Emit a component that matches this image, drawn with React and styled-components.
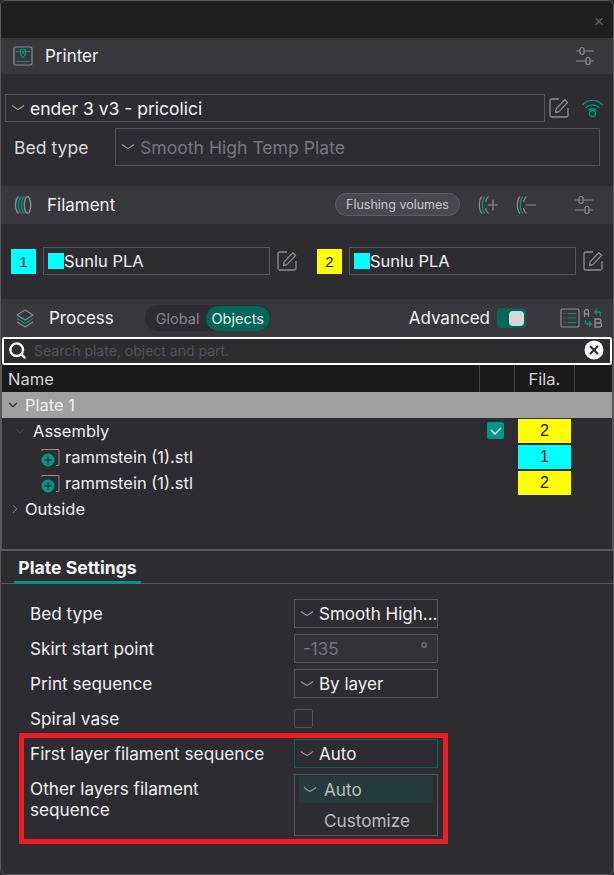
import React from 'react';
import styled, { createGlobalStyle } from 'styled-components';
import { Search, ChevronDown, ChevronRight } from 'lucide-react';

const GRAY = '#8f8f8f';
const TEAL = '#00957f';

const Global = createGlobalStyle`
html, body { margin: 0; padding: 0; background: #2d2d31; }
* { box-sizing: border-box; }
`;

const Window = styled.div`
width: 614px;
height: 875px;
overflow: hidden;
background: #2d2d31;
border: 1px solid #5a5a5c;
border-radius: 6px;
color: #f0f0f0;
font-family: Inter, "Noto Sans", sans-serif;
font-size: 17px;
display: flex;
flex-direction: column;
`;
const TitleBar = styled.div`
height: 37px;
flex: none;
background: #1f1f20;
display: flex;
justify-content: flex-end;
align-items: center;
padding-right: 9px;
padding-top: 5px;
color: #626264;
font-size: 17px;
font-family: "Liberation Sans", sans-serif;
`;
const SectionHeader = styled.div`
height: ${p => p.$h || 36}px;
flex: none;
background: #37373c;
display: flex;
align-items: center;
padding-left: ${p => p.$left || 12}px;
`;
const SectionTitle = styled.span`
margin-left: ${p => p.$gap || 12}px;
font-size: 17px;
color: #f2f2f2;
`;
const Spacer = styled.div`flex: 1;`;
const IconSlot = styled.div`
display: flex;
margin-left: ${p => p.$left || 0}px;
margin-right: ${p => p.$right || 0}px;
`;
const PrinterBody = styled.div`
height: 112px;
flex: none;
padding: 20px 0 0 4px;
display: flex;
flex-direction: column;
gap: 6px;
`;
const Row = styled.div`
display: flex;
align-items: center;
`;
const Select = styled.div`
display: flex;
align-items: center;
width: ${p => p.$w}px;
height: ${p => p.$h || 29}px;
flex: none;
border: 1px solid ${p => p.$active ? '#00675b' : '#55555a'};
padding-left: 5px;
white-space: nowrap;
overflow: hidden;
font-size: ${p => p.$size || 17}px;
color: ${p => p.$dim ? '#77777b' : '#f2f2f2'};
`;
const Chevron = styled.svg`
flex: none;
margin-right: ${p => p.$gap || 5}px;
`;
const BedLabel = styled.span`
width: 110px;
padding-left: 9px;
font-size: 17.6px;
color: #d8d8d8;
flex: none;
`;
const FlushButton = styled.div`
width: 125px;
height: 23px;
border-radius: 12px;
border: 1px solid #5d5d63;
background: #48484e;
color: #c8c8c8;
font-size: 12.5px;
display: flex;
align-items: center;
justify-content: center;
margin-right: 18px;
margin-bottom: 2px;
`;
const FilamentBody = styled.div`
height: 75px;
flex: none;
display: flex;
padding: 23px 0 0 10px;
`;
const FilamentItem = styled.div`
display: flex;
align-items: center;
width: 306px;
height: 28px;
flex: none;
`;
const Swatch = styled.div`
width: 25px;
height: 25px;
background: ${p => p.$color};
color: #111;
font-size: 15px;
font-family: "Liberation Sans", sans-serif;
display: flex;
align-items: center;
justify-content: center;
margin-right: 7px;
`;
const FilamentInput = styled.div`
width: 227px;
height: 28px;
border: 1px solid #55555a;
display: flex;
align-items: center;
padding-left: 4px;
margin-right: 7px;
font-size: 16.5px;
`;
const Chip = styled.span`
width: 16px;
height: 16px;
background: #00ffff;
flex: none;
`;
const ModeToggle = styled.div`
width: 126px;
height: 26px;
margin-left: 31px;
border-radius: 13px;
background: #2d2d31;
display: flex;
align-items: center;
justify-content: space-between;
padding-left: 11px;
padding-right: 1px;
font-size: 14.5px;
color: #85858a;
`;
const ModePill = styled.span`
width: 64px;
height: 25px;
border-radius: 13px;
background: #00675b;
color: #f0f0f0;
display: flex;
align-items: center;
justify-content: center;
`;
const Switch = styled.div`
width: 29px;
height: 20px;
margin-left: 7px;
border-radius: 4px;
background: #00675b;
display: flex;
align-items: center;
justify-content: flex-end;
padding-right: 2px;
`;
const Knob = styled.span`
width: 15px;
height: 15px;
border-radius: 4px;
background: #d2dad7;
`;
const SearchBar = styled.div`
height: 28px;
flex: none;
margin: 0 1px;
border: 2px solid #fff;
border-radius: 2px;
display: flex;
align-items: center;
padding: 0 6px 2px 4px;
font-size: 14px;
color: #55555a;
`;
const Placeholder = styled.span`
margin-left: 7px;
flex: 1;
`;
const Clear = styled.svg`flex: none;`;
const Tree = styled.div`
height: 186px;
flex: none;
border-left: 1px solid #5a5a5c;
border-right: 1px solid #5a5a5c;
border-bottom: 2px solid #59595c;
`;
const TreeHead = styled.div`
height: 27px;
background: #19191a;
display: grid;
grid-template-columns: 478px 35px 60px 1fr;
font-size: 16.5px;
color: #d5d5d5;
`;
const HeadCell = styled.div`
border-right: 1px solid ${p => p.$plain ? 'transparent' : '#444'};
display: flex;
align-items: center;
justify-content: ${p => p.$center ? 'center' : 'flex-start'};
padding-left: ${p => p.$left || 0}px;
`;
const TreeRow = styled.div`
height: 26px;
display: flex;
align-items: center;
padding-left: ${p => p.$indent}px;
font-size: 16.5px;
background: ${p => p.$selected ? '#a0a0a0' : 'transparent'};
position: relative;
`;
const Arrow = styled.span`
display: flex;
width: ${p => p.$w}px;
flex: none;
color: ${p => p.$color};
`;
const ObjectIcon = styled.svg`
margin-right: 5px;
flex: none;
`;
const RowTail = styled.div`
position: absolute;
left: 516px;
top: 1px;
width: 53px;
height: 24px;
background: ${p => p.$color};
color: #111;
font-family: "Liberation Sans", sans-serif;
font-size: 16px;
display: flex;
align-items: center;
justify-content: center;
`;
const Check = styled.div`
position: absolute;
left: 485px;
top: 4px;
width: 17px;
height: 17px;
border-radius: 2px;
background: #009688;
display: flex;
align-items: center;
justify-content: center;
`;
const TabBar = styled.div`
height: 33px;
flex: none;
border-bottom: 1px solid #59595c;
padding-left: 13px;
display: flex;
`;
const Tab = styled.div`
width: 127px;
height: 33px;
border-bottom: 3px solid #009688;
border-radius: 0 0 2px 2px;
text-align: center;
padding-top: 6px;
font-size: 17.6px;
font-weight: 700;
white-space: nowrap;
color: #f5f5f5;
`;
const Form = styled.div`
padding: 15px 0 0 29px;
display: flex;
flex-direction: column;
`;
const FormRow = styled.div`
display: grid;
grid-template-columns: 264px 144px;
align-items: ${p => p.$top ? 'start' : 'center'};
min-height: 29px;
margin-bottom: 6px;
font-size: 17.2px;
`;
const Highlight = styled.div`
width: 429px;
height: 111px;
margin: -6px 0 0 -11px;
padding: 1px 0 0 6px;
border: 5px solid #ee1c25;
`;
const Skirt = styled(Select)`
justify-content: space-between;
padding: 0 9px 0 8px;
background: #333337;
`;
const CheckBox = styled.div`
width: 19px;
height: 19px;
border: 1px solid #55555a;
border-radius: 2px;
`;
const Dropdown = styled.div`
width: 144px;
height: 62px;
border: 1px solid #55555a;
padding: 1px 4px;
display: flex;
flex-direction: column;
gap: 4px;
`;
const Option = styled.div`
height: 27px;
flex: none;
display: flex;
align-items: center;
padding-left: ${p => p.$left}px;
background: ${p => p.$on ? '#243b3a' : 'transparent'};
color: #bdbdbd;
font-size: 17.2px;
`;
const WrapLabel = styled.div`
line-height: 20.5px;
padding-top: 5px;
width: 200px;
`;

const Caret = ({ gap }) => (
  <Chevron $gap={gap} width="14" height="8" viewBox="0 0 14 8" fill="none" stroke="#9a9a9a" strokeWidth="1.1">
    <path d="M1 1.5 Q4 4 7 5.5 Q10 4 13 1.5" />
  </Chevron>
);

const Sliders = () => (
  <svg width="20" height="20" viewBox="0 0 20 20" fill="none" stroke={GRAY} strokeWidth="1.2">
    <path d="M1 5h4M9 5h10M1 15h10M15 15h4" />
    <rect x="5" y="1.5" width="4" height="7" rx="2" />
    <rect x="11" y="11.5" width="4" height="7" rx="2" />
  </svg>
);

const Edit = () => (
  <svg width="20" height="20" viewBox="0 0 20 20" fill="none" stroke={GRAY} strokeWidth="1.3" strokeLinejoin="round">
    <path d="M10 1H2.5A1.5 1.5 0 0 0 1 2.5v15A1.5 1.5 0 0 0 2.5 19h15a1.5 1.5 0 0 0 1.5-1.5V10" />
    <path d="M6.5 14.5l.6-3.6L15.8 1.8l2.8 2.6-8.7 9.2z" />
  </svg>
);

const Wifi = () => (
  <svg width="21" height="20" viewBox="0 0 21 20" fill="none" stroke={TEAL} strokeWidth="1.4" strokeLinecap="round">
    <path d="M1 6.5C6 1 15 1 20 6.5" />
    <path d="M4 9.5C7.5 6 13.5 6 17 9.5" />
    <path d="M7 12C9 10.5 12 10.5 14 12" />
    <circle cx="10.5" cy="15.5" r="3" />
  </svg>
);

const PrinterIcon = () => (
  <svg width="20" height="20" viewBox="0 0 20 20" fill="none">
    <rect x="1" y="1" width="18" height="18" rx="1.5" stroke={GRAY} strokeWidth="1.2" />
    <path d="M3 5.5h14M3.5 15.5h13" stroke={TEAL} strokeWidth="1.2" />
    <path d="M7.5 3.5h5v5l-2.5 3-2.5-3z" stroke={TEAL} strokeWidth="1.2" />
    <circle cx="10" cy="7" r="1" fill={TEAL} />
  </svg>
);

const Spool = () => (
  <svg width="18" height="20" viewBox="0 0 18 20" fill="none" strokeWidth="1.4">
    <path d="M4.5 1.5C0.5 5 0.5 15 4.5 18.5" stroke={GRAY} />
    <path d="M7.5 1.5C3.5 5 3.5 15 7.5 18.5" stroke={TEAL} />
    <path d="M10.5 1.5C6.5 5 6.5 15 10.5 18.5" stroke={TEAL} />
    <ellipse cx="13.5" cy="10" rx="3.2" ry="8.5" stroke={GRAY} />
  </svg>
);

const SpoolEdit = ({ plus }) => (
  <svg width="21" height="20" viewBox="0 0 21 20" fill="none" strokeWidth="1.2">
    <path d="M4 1.5C0.5 5 0.5 15 4 18.5" stroke={GRAY} />
    <path d="M7 1.5C3.5 5 3.5 15 7 18.5" stroke={TEAL} />
    <path d="M10.5 1.5C8.5 3 7.8 5 7.5 7M7.5 13C7.8 15 8.5 17 10.5 18.5" stroke={GRAY} />
    <path d="M10 10h10" stroke={GRAY} />
    {plus && <path d="M15 4.5v11" stroke={GRAY} />}
  </svg>
);

const Layers = () => (
  <svg width="20" height="20" viewBox="0 0 20 20" fill="none" strokeWidth="1.2" strokeLinejoin="round">
    <path d="M10 2l8 5-8 5-8-5z" stroke={GRAY} />
    <path d="M2 10.5l8 5 8-5" stroke={TEAL} />
    <path d="M2 14l8 5 8-5" stroke={GRAY} />
  </svg>
);

const ListIcon = () => (
  <svg width="20" height="20" viewBox="0 0 20 20" fill="none">
    <rect x="1" y="1" width="18" height="18" rx="1.5" stroke={GRAY} strokeWidth="1.2" />
    <path d="M4 5.5h1.5M7.5 5.5H16M4 10h1.5M7.5 10H16M4 14.5h1.5M7.5 14.5H16" stroke={TEAL} strokeWidth="1.2" />
  </svg>
);

const SwapIcon = () => (
  <svg width="20" height="20" viewBox="0 0 20 20" fill="none" strokeWidth="1.3">
    <path d="M1.5 9V3.5a2 2 0 0 1 4 0V9M1.5 6h4" stroke={GRAY} />
    <path d="M14 1.5L11.5 4l2.5 2.5M11.5 4h4.5a1.5 1.5 0 0 1 1.5 1.5V8" stroke={TEAL} />
    <path d="M6 18.5l2.5-2.5L6 13.5M8.5 16H4a1.5 1.5 0 0 1-1.5-1.5V12" stroke={TEAL} />
    <path d="M12 11h4a2 2 0 0 1 0 4h-4zM12 15h4.5a2 2 0 0 1 0 4H12z" stroke={GRAY} />
  </svg>
);

const ObjIcon = () => (
  <ObjectIcon width="19" height="19" viewBox="0 0 19 19" fill="none">
    <path d="M1 3V1.5h17v16h-3" stroke={GRAY} strokeWidth="1" />
    <circle cx="7" cy="12" r="6.5" fill="#009688" />
    <path d="M3.5 12h7M7 8.5v7" stroke="#2d2d31" strokeWidth="1.4" />
  </ObjectIcon>
);

const objects = [
  { name: 'rammstein (1).stl', slot: '1', color: '#00ffff' },
  { name: 'rammstein (1).stl', slot: '2', color: '#ffff00' },
];

const Filament = ({ slot, color }) => (
  <FilamentItem>
    <Swatch $color={color}>{slot}</Swatch>
    <FilamentInput><Chip />Sunlu PLA</FilamentInput>
    <Edit />
  </FilamentItem>
);

const App = () => (
  <Window>
    <Global />
    <TitleBar>×</TitleBar>

    <SectionHeader>
      <PrinterIcon />
      <SectionTitle>Printer</SectionTitle>
      <Spacer />
      <IconSlot $right={18}><Sliders /></IconSlot>
    </SectionHeader>
    <PrinterBody>
      <Row>
        <Select $w={540} $h={28} $size={17.5}><Caret gap={5} />ender 3 v3 - pricolici</Select>
        <IconSlot $left={4}><Edit /></IconSlot>
        <IconSlot $left={13}><Wifi /></IconSlot>
      </Row>
      <Row>
        <BedLabel>Bed type</BedLabel>
        <Select $w={485} $h={38} $size={17.6} $dim><Caret gap={5} />Smooth High Temp Plate</Select>
      </Row>
    </PrinterBody>

    <SectionHeader $h={38} $left={13}>
      <Spool />
      <SectionTitle $gap={15}>Filament</SectionTitle>
      <Spacer />
      <FlushButton>Flushing volumes</FlushButton>
      <SpoolEdit plus />
      <IconSlot $left={17}><SpoolEdit /></IconSlot>
      <IconSlot $left={37} $right={19}><Sliders /></IconSlot>
    </SectionHeader>
    <FilamentBody>
      <Filament slot="1" color="#00ffff" />
      <Filament slot="2" color="#ffff00" />
    </FilamentBody>

    <SectionHeader $h={38} $left={14}>
      <Layers />
      <SectionTitle $gap={14}>Process</SectionTitle>
      <ModeToggle>Global<ModePill>Objects</ModePill></ModeToggle>
      <Spacer />
      <span>Advanced</span>
      <Switch><Knob /></Switch>
      <IconSlot $left={34}><ListIcon /></IconSlot>
      <IconSlot $left={3} $right={10}><SwapIcon /></IconSlot>
    </SectionHeader>
    <SearchBar>
      <Search size={19} color="#fff" strokeWidth={3} />
      <Placeholder>Search plate, object and part.</Placeholder>
      <Clear width="20" height="20" viewBox="0 0 20 20">
        <circle cx="10" cy="10" r="9.5" fill="#fff" />
        <path d="M6 6l8 8M14 6l-8 8" stroke="#2d2d31" strokeWidth="2" />
      </Clear>
    </SearchBar>

    <Tree>
      <TreeHead>
        <HeadCell $left={6}>Name</HeadCell>
        <HeadCell />
        <HeadCell $center>Fila.</HeadCell>
        <HeadCell $plain />
      </TreeHead>
      <TreeRow $indent={4} $selected>
        <Arrow $w={19} $color="#2d2d31"><ChevronDown size={14} strokeWidth={2} /></Arrow>
        Plate 1
      </TreeRow>
      <TreeRow $indent={11}>
        <Arrow $w={20} $color="#55555a"><ChevronDown size={14} strokeWidth={1.6} /></Arrow>
        Assembly
        <Check>
          <svg width="12" height="8" viewBox="0 0 12 8" fill="none" stroke="#fff" strokeWidth="1.3">
            <path d="M1 3l4 4 6-6" />
          </svg>
        </Check>
        <RowTail $color="#ffff00">2</RowTail>
      </TreeRow>
      {objects.map((o) => (
        <TreeRow $indent={39} key={o.slot}>
          <ObjIcon />
          {o.name}
          <RowTail $color={o.color}>{o.slot}</RowTail>
        </TreeRow>
      ))}
      <TreeRow $indent={6}>
        <Arrow $w={17} $color={GRAY}><ChevronRight size={14} strokeWidth={1.6} /></Arrow>
        Outside
      </TreeRow>
    </Tree>

    <TabBar><Tab>Plate Settings</Tab></TabBar>

    <Form>
      <FormRow>
        <span>Bed type</span>
        <Select $w={144}><Caret gap={5} />Smooth High...</Select>
      </FormRow>
      <FormRow>
        <span>Skirt start point</span>
        <Skirt $w={144} $dim>-135<span>°</span></Skirt>
      </FormRow>
      <FormRow>
        <span>Print sequence</span>
        <Select $w={144}><Caret gap={5} />By layer</Select>
      </FormRow>
      <FormRow>
        <span>Spiral vase</span>
        <CheckBox />
      </FormRow>
      <Highlight>
        <FormRow>
          <span>First layer filament sequence</span>
          <Select $w={144} $active><Caret gap={5} />Auto</Select>
        </FormRow>
        <FormRow $top>
          <WrapLabel>Other layers filament sequence</WrapLabel>
          <Dropdown>
            <Option $on $left={4}><Caret gap={7} />Auto</Option>
            <Option $left={25}>Customize</Option>
          </Dropdown>
        </FormRow>
      </Highlight>
    </Form>
  </Window>
);

export default App;
